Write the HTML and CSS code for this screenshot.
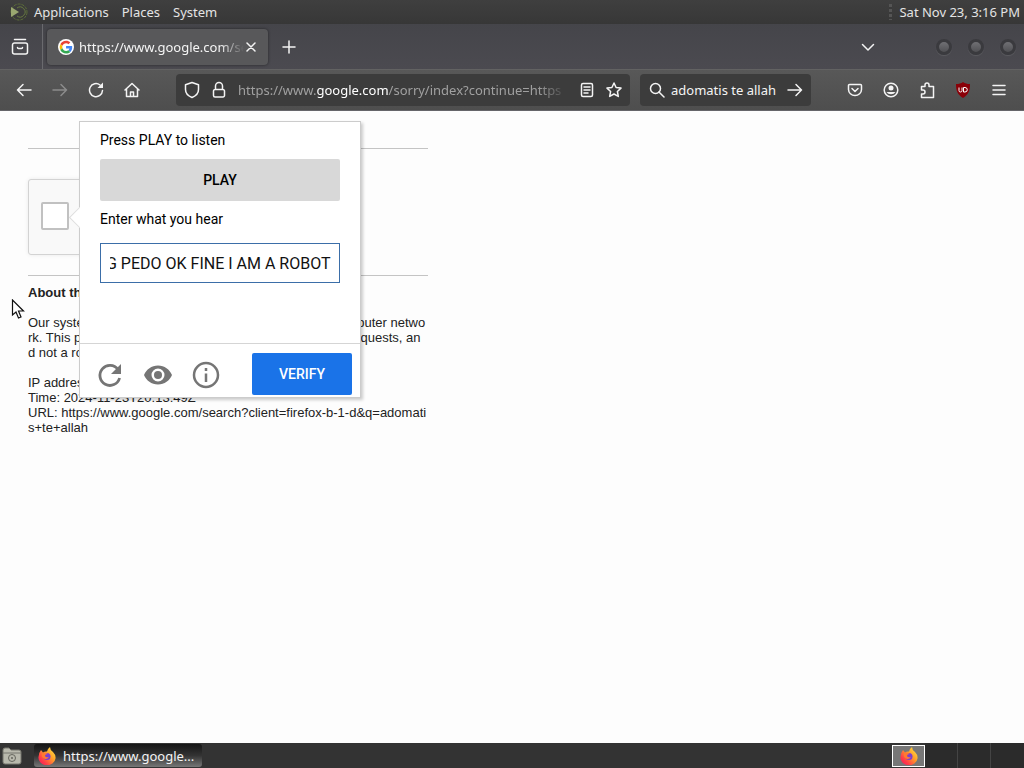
FILE: index.html
```html
<!DOCTYPE html>
<html lang="en">
<head>
    <meta charset="UTF-8">
    <meta name="viewport" content="width=device-width, initial-scale=1.0">
    <title>https://www.google.com/sorry</title>
    <link rel="stylesheet" href="styles.css">
</head>
<body>
    <header class="menu-bar">
        <svg class="distro" width="18" height="18" viewBox="0 0 18 18" fill="none">
            <circle cx="9" cy="9" r="8" stroke="#5c6e38" stroke-dasharray="3 1"/>
            <path d="M7 5a5 5 0 1 1 0 8" stroke="#687a40"/>
            <path d="M1 4l8 5-8 5z" fill="#9aa870"/>
        </svg>
        <nav class="menus">
            <button>Applications</button>
            <button>Places</button>
            <button>System</button>
        </nav>
        <span class="grip"></span>
        <time class="clock">Sat Nov 23, 3:16 PM</time>
    </header>

    <div class="tab-bar">
        <button class="view-btn" aria-label="Firefox View">
            <svg width="18" height="18" viewBox="0 0 18 18" class="line"><path d="M3.500 1.500h11M3.500 5h11a2 2 0 0 1 2 2v7a2 2 0 0 1-2 2h-11a2 2 0 0 1-2-2V7a2 2 0 0 1 2-2zM6.500 9.500q0 1 1 1h3q1 0 1-1"/></svg>
        </button>
        <div class="tab">
            <svg width="16" height="16" viewBox="0 0 48 48">
                <circle cx="24" cy="24" r="24" fill="#fff"/>
                <g transform="translate(5 5) scale(.8)">
                    <path fill="#ea4335" d="M24 9.500c3.500 0 6.700 1.200 9.200 3.600l6.900-6.900C35.900 2.400 30.500 0 24 0 14.600 0 6.500 5.400 2.600 13.200l8 6.200C12.400 13.700 17.700 9.500 24 9.500z"/>
                    <path fill="#4285f4" d="M47 24.600c0-1.600-.2-3.100-.4-4.600H24v9h12.900c-.6 3-2.300 5.500-4.700 7.200l7.700 6C44.400 38 47 31.800 47 24.600z"/>
                    <path fill="#fbbc05" d="M10.500 28.600c-.5-1.500-.8-3-.8-4.600s.3-3.100.8-4.600l-8-6.200C.9 16.500 0 20.100 0 24s.9 7.500 2.600 10.800z"/>
                    <path fill="#34a853" d="M24 48c6.500 0 11.900-2.100 15.900-5.800l-7.700-6c-2.200 1.500-4.900 2.300-8.200 2.300-6.300 0-11.600-4.200-13.500-9.900l-8 6.200C6.500 42.600 14.600 48 24 48z"/>
                </g>
            </svg>
            <span class="tab-title">https://www.google.com/se</span>
            <button class="tab-close" aria-label="Close tab">
                <svg width="10" height="10" viewBox="0 0 10 10" class="line"><path d="M1 1l8 8M9 1L1 9"/></svg>
            </button>
        </div>
        <button class="new-tab" aria-label="New tab">
            <svg width="14" height="14" viewBox="0 0 14 14" class="line"><path d="M7 1v12M1 7h12"/></svg>
        </button>
        <button class="tab-list" aria-label="List all tabs">
            <svg width="14" height="14" viewBox="0 0 14 14" class="line"><path d="M1.500 4.500L7 10l5.500-5.500"/></svg>
        </button>
        <div class="window-buttons">
            <button aria-label="Minimize"></button>
            <button aria-label="Maximize"></button>
            <button aria-label="Close"></button>
        </div>
    </div>

    <div class="nav-bar">
        <div class="nav-buttons">
            <button aria-label="Back"><svg width="16" height="16" viewBox="0 0 16 16" class="line"><path d="M15 8H1.500M7 2.500L1.500 8 7 13.500"/></svg></button>
            <button aria-label="Forward" class="dim"><svg width="16" height="16" viewBox="0 0 16 16" class="line"><path d="M1 8h13.500M9 2.500L14.500 8 9 13.500"/></svg></button>
            <button aria-label="Reload"><svg width="16" height="16" viewBox="0 0 16 16" class="line"><path d="M14.500 8.500a6.500 6.500 0 1 1-2.500-5.500"/><path d="M15 .5V6H9.500z" fill="currentColor" stroke="none"/></svg></button>
            <button aria-label="Home"><svg width="16" height="16" viewBox="0 0 16 16" class="line"><path d="M1 8l7-6.500L15 8M2.500 7v7.500h11V7M6.500 14.500V10h3v4.500"/></svg></button>
        </div>
        <div class="url-bar">
            <svg width="16" height="18" viewBox="0 0 16 18" class="line"><path d="M8 1.500l6.500 2.300v4.700c0 3.500-2.700 6.500-6.500 8-3.800-1.500-6.500-4.500-6.500-8V3.800z"/></svg>
            <svg width="14" height="18" viewBox="0 0 14 18" class="line"><path d="M3.500 8V5a3.500 3.500 0 0 1 7 0v3M3 8.500h8a1.500 1.500 0 0 1 1.500 1.500v4.500A1.500 1.500 0 0 1 11 16H3a1.500 1.500 0 0 1-1.500-1.500V10A1.500 1.500 0 0 1 3 8.500z"/></svg>
            <div class="url" role="textbox" aria-label="Address" contenteditable="true" spellcheck="false">https://www.<span class="domain">google.com</span>/sorry/index?continue=https</div>
            <button aria-label="Reader view"><svg width="14" height="16" viewBox="0 0 14 16" class="line"><rect x="1.500" y="1.500" width="11" height="13" rx="1.500"/><path d="M4 5h6M4 8h6M4 11h4"/></svg></button>
            <button aria-label="Bookmark"><svg width="16" height="16" viewBox="0 0 16 16" class="line"><path d="M8 1l2.100 4.500 4.900.6-3.600 3.400.9 4.900L8 12l-4.300 2.400.9-4.900L1 6.100l4.900-.6z"/></svg></button>
        </div>
        <div class="search-bar">
            <svg width="16" height="16" viewBox="0 0 16 16" class="line"><circle cx="6.500" cy="6.500" r="5"/><path d="M10 10l5 5"/></svg>
            <input type="text" value="adomatis te allah" aria-label="Search">
            <button aria-label="Go"><svg width="16" height="16" viewBox="0 0 16 16" class="line"><path d="M1 8h13.500M9 2.500L14.500 8 9 13.500"/></svg></button>
        </div>
        <div class="tools">
            <button aria-label="Pocket"><svg width="16" height="16" viewBox="0 0 16 16" class="line"><path d="M2.500 2.500h11a1 1 0 0 1 1 1V7.500a6.500 6 0 0 1-13 0v-4a1 1 0 0 1 1-1zM5 6.500l3 3 3-3"/></svg></button>
            <button aria-label="Account"><svg width="16" height="16" viewBox="0 0 16 16" class="line"><circle cx="8" cy="8" r="6.800"/><circle cx="8" cy="6" r="2.500" fill="currentColor" stroke="none"/><path d="M3.500 10h9a5 4 0 0 1-9 0z" fill="currentColor" stroke="none"/></svg></button>
            <button aria-label="Extensions"><svg width="16" height="18" viewBox="0 0 16 18" class="line"><path d="M2.500 5.500H6V4a2 2 0 0 1 4 0v1.500h4.500v11h-12V13H4a2 2 0 0 0 0-4H2.500z"/></svg></button>
            <button aria-label="uBlock Origin"><svg width="16" height="16" viewBox="0 0 16 16"><path d="M8 0c2 1.500 4 2 7 2 0 7-1.500 10.500-7 14C2.500 12.500 1 9 1 2c3 0 5-.5 7-2z" fill="#8a0008"/><path d="M4 5.500v3a1.500 1.500 0 0 0 3 0v-3M8.500 5.500v4.500h1.500a2.200 2.200 0 0 0 0-4.500z" fill="none" stroke="#fff"/></svg></button>
            <button aria-label="Menu"><svg width="14" height="14" viewBox="0 0 14 14" class="line"><path d="M1 2.500h12M1 7h12M1 11.500h12"/></svg></button>
        </div>
    </div>

    <main class="page">
        <div class="content">
            <hr>
            <div class="captcha-box">
                <input type="checkbox" aria-label="I'm not a robot">
            </div>
            <hr>
            <div class="about">
                <b>About this page</b>
                <p>Our systems have detected unusual traffic from your computer network. This page checks to see if it's really you sending the requests, and not a robot.</p>
                <p>IP address: hidden<br>Time: 2024-11-23T20:13:49Z<br>URL: https://www.google.com/search?client=firefox-b-1-d&amp;q=adomatis+te+allah</p>
            </div>
        </div>

        <form class="challenge">
            <div class="challenge-body">
                <span class="prompt">Press PLAY to listen</span>
                <button type="button" class="play-btn">PLAY</button>
                <label class="prompt" for="answer">Enter what you hear</label>
                <input type="text" id="answer" class="answer" value="G PEDO OK FINE I AM A ROBOT">
            </div>
            <div class="challenge-footer">
                <button type="button" aria-label="New challenge"><svg width="28" height="28" viewBox="0 0 28 28"><path d="M22 8.500A10 10 0 1 0 23.600 17" fill="none" stroke="#757575" stroke-width="2.800"/><path d="M25 3v10H15z" fill="#757575"/></svg></button>
                <button type="button" aria-label="Visual challenge"><svg width="28" height="28" viewBox="0 0 28 28"><path fill="#757575" fill-rule="evenodd" d="M14 4.500C7.500 4.500 2.300 8.500 0 14c2.300 5.500 7.500 9.500 14 9.500S25.700 19.500 28 14C25.700 8.500 20.500 4.500 14 4.500zM14 20.500a6.500 6.500 0 1 1 0-13 6.500 6.500 0 0 1 0 13z"/><circle cx="14" cy="14" r="4" fill="#757575"/></svg></button>
                <button type="button" aria-label="Help"><svg width="28" height="28" viewBox="0 0 28 28" fill="none" stroke="#757575" stroke-width="2.500"><circle cx="14" cy="14" r="12"/><path d="M14 12.500V21M14 7v3"/></svg></button>
                <button type="button" class="verify-btn">VERIFY</button>
            </div>
        </form>

        <svg class="pointer" width="14" height="21" viewBox="0 0 14 21"><path d="M1.500 1v15l3.500-3 2.500 6 2.500-1-2.500-6h5z" fill="#fff" stroke="#111" stroke-width="1.200"/></svg>
    </main>

    <footer class="task-bar">
        <button class="show-desktop" aria-label="Files">
            <svg width="20" height="18" viewBox="0 0 20 18"><path d="M1 3q0-2 2-2h4l2 2h8q2 0 2 2v10q0 2-2 2H3q-2 0-2-2z" fill="#b9b9ad" stroke="#77776e"/><path d="M1 6h18" stroke="#77776e"/><circle cx="10" cy="11" r="3.500" fill="none" stroke="#66665e"/><circle cx="10" cy="11" r="1" fill="#66665e"/></svg>
        </button>
        <button class="task">
            <svg width="18" height="18" viewBox="0 0 18 18"><use href="#firefox"/></svg>
            <span>https://www.google...</span>
        </button>
        <div class="workspaces">
            <button class="active" aria-label="Workspace 1">
                <svg width="18" height="18" viewBox="0 0 18 18">
                    <defs>
                        <linearGradient id="flame" x1="1" y1="0" x2="0" y2="1">
                            <stop offset="0" stop-color="#fff04a"/>
                            <stop offset=".4" stop-color="#ffa028"/>
                            <stop offset=".75" stop-color="#ff3a4a"/>
                            <stop offset="1" stop-color="#f0185c"/>
                        </linearGradient>
                        <g id="firefox">
                            <path d="M3 3l2 2.500Q7 4 9 4.500 9.500 1.500 12 0q0 3 3 5 3 3 2.500 6.500A8.500 7.500 0 0 1 .5 10Q.5 6 3 3z" fill="url(#flame)"/>
                            <circle cx="9" cy="9.500" r="3.500" fill="#7a3fd0"/>
                            <path d="M4 6q3-1 6 1-3 0-3 2 1 2 4 1-2 3-5 1.500Q3 10 4 6z" fill="#ff7a30"/>
                        </g>
                    </defs>
                    <use href="#firefox"/>
                </svg>
            </button>
            <button aria-label="Workspace 2"></button>
            <button aria-label="Workspace 3"></button>
            <button aria-label="Workspace 4"></button>
        </div>
    </footer>
</body>
</html>
```

FILE: styles.css
```css
* {
    box-sizing: border-box;
}
body {
    margin: 0;
    height: 100vh;
    display: flex;
    flex-direction: column;
    overflow: hidden;
    font-family: "Noto Sans", sans-serif;
    font-size: 13px;
    color: #f4f4f4;
    background-color: #fdfdfd;
}
button {
    display: flex;
    align-items: center;
    justify-content: center;
    padding: 0;
    border: none;
    background: none;
    color: inherit;
    font: inherit;
}
svg {
    display: block;
    flex-shrink: 0;
}
.line {
    fill: none;
    stroke: currentColor;
    stroke-width: 1.5;
    stroke-linecap: round;
    stroke-linejoin: round;
}
.menu-bar {
    display: flex;
    align-items: center;
    height: 24px;
    padding: 0 4px 0 10px;
    background: linear-gradient(#3f3f3f, #373737);
    color: #e4e4e4;
}
.menus {
    display: flex;
    gap: 13px;
    margin-left: 6px;
}
.grip {
    width: 3px;
    height: 16px;
    margin-left: auto;
    margin-right: 7px;
    background: repeating-linear-gradient(#555 0 3px, #3a3a3a 3px 5px);
}
.tab-bar {
    display: flex;
    align-items: center;
    height: 45px;
    padding-right: 8px;
    background: linear-gradient(#45454a, #4b4a50);
}
.view-btn {
    width: 43px;
    height: 45px;
    padding-right: 2px;
    border-right: 1px solid #6a6a6e;
}
.tab {
    display: flex;
    align-items: center;
    width: 221px;
    height: 36px;
    margin-left: 4px;
    padding: 0 12px 0 11px;
    border-radius: 4px;
    background-color: #58585a;
    box-shadow: 0 0 3px rgba(0,0,0,0.5);
}
.tab-title {
    flex: 1;
    margin-left: 5px;
    overflow: hidden;
    white-space: nowrap;
    -webkit-mask-image: linear-gradient(to left, transparent, #000 24px);
    mask-image: linear-gradient(to left, transparent, #000 24px);
}
.tab-close {
    margin-left: 2px;
}
.new-tab {
    margin-left: 14px;
}
.tab-list {
    margin-left: auto;
    margin-right: 61px;
}
.window-buttons {
    display: flex;
    gap: 16px;
}
.window-buttons button {
    width: 16px;
    height: 16px;
    border: 3px solid #3a3a3e;
    border-radius: 50%;
    background: linear-gradient(#707074, #505054);
    box-shadow: 0 1px 1px #5c5c60;
}
.nav-bar {
    display: flex;
    align-items: center;
    height: 42px;
    padding: 0 18px 0 16px;
    border-top: 1px solid #626262;
    border-bottom: 1px solid #66666a;
    background: linear-gradient(#585858, #4e4e4e);
}
.nav-buttons {
    display: flex;
    gap: 20px;
}
.dim {
    color: #8c8c8c;
}
.url-bar,
.search-bar {
    display: flex;
    align-items: center;
    height: 32px;
    border-radius: 4px;
    background-color: #3c3c3c;
}
.url-bar {
    flex: 1;
    gap: 12px;
    min-width: 0;
    margin-left: 36px;
    padding: 0 8px;
}
.url {
    flex: 1;
    min-width: 0;
    overflow: hidden;
    white-space: nowrap;
    color: #a0a0a0;
    -webkit-mask-image: linear-gradient(to left, transparent, #000 30px);
    mask-image: linear-gradient(to left, transparent, #000 30px);
}
.domain {
    color: #fff;
}
.search-bar {
    width: 171px;
    margin-left: 10px;
    padding: 0 8px 0 9px;
}
.search-bar input {
    flex: 1;
    min-width: 0;
    margin-left: 6px;
    padding: 0;
    border: none;
    outline: none;
    background: none;
    color: inherit;
    font: inherit;
}
.tools {
    display: flex;
    gap: 20px;
    margin-left: 36px;
}
.tools button:last-child {
    margin-left: 1px;
}
.page {
    position: relative;
    flex: 1;
    color: #222;
    font: 13px/15px "Liberation Sans", Arial, sans-serif;
}
.content {
    max-width: 428px;
    padding: 37px 0 0 28px;
}
.content hr {
    height: 1px;
    margin: 0;
    border: none;
    background-color: #c4c4c4;
}
.captcha-box {
    display: flex;
    align-items: center;
    width: 304px;
    height: 76px;
    margin: 30px 0 20px;
    padding-left: 12px;
    border: 1px solid #d3d3d3;
    border-radius: 3px;
    background-color: #f9f9f9;
    box-shadow: 0 0 4px rgba(0,0,0,0.08);
}
.captcha-box input {
    appearance: none;
    width: 28px;
    height: 28px;
    margin: 0 0 2px;
    border: 2px solid #c1c1c1;
    border-radius: 2px;
    background-color: #fff;
}
.about {
    margin-top: 9px;
    padding-right: 1px;
    word-break: break-all;
}
.about p {
    margin: 15px 0 0;
}
/* popup floats over the page */
.challenge {
    position: absolute;
    top: 10px;
    left: 79px;
    width: 282px;
    border: 1px solid #ccc;
    background-color: #fff;
    box-shadow: 2px 2px 3px rgba(0,0,0,0.2);
    color: #000;
    font: 14px/20px Roboto, sans-serif;
}
.challenge::before {
    content: "";
    position: absolute;
    top: 88px;
    left: -8px;
    width: 14px;
    height: 14px;
    border-left: 1px solid #ddd;
    border-bottom: 1px solid #ddd;
    background-color: #fff;
    transform: rotate(45deg);
}
.challenge-body {
    position: relative;
    display: flex;
    flex-direction: column;
    padding: 8px 20px 60px;
    background-color: #fff;
}
.play-btn {
    height: 42px;
    margin: 9px 0 8px;
    border-radius: 2px;
    background-color: #d8d8d8;
    font-weight: 500;
}
.answer {
    height: 40px;
    margin-top: 14px;
    padding: 0 8px 0 9px;
    border: 1px solid #3b6ea8;
    outline: none;
    color: #111;
    font: 16px Roboto, sans-serif;
    text-indent: -4px;
}
.challenge-footer {
    display: flex;
    align-items: center;
    gap: 20px;
    height: 54px;
    padding: 8px 8px 0 16px;
    border-top: 1px solid #d5d5d5;
}
.verify-btn {
    width: 100px;
    height: 42px;
    margin: 0 0 2px auto;
    border-radius: 2px;
    background-color: #1a73e8;
    color: #fff;
    font-weight: 500;
}
.pointer {
    position: absolute;
    top: 188px;
    left: 11px;
}
.task-bar {
    display: flex;
    align-items: center;
    height: 25px;
    padding-left: 2px;
    background-color: #333;
}
.task {
    gap: 7px;
    width: 168px;
    height: 23px;
    margin-left: 12px;
    padding-left: 4px;
    justify-content: flex-start;
    border-radius: 3px;
    background: linear-gradient(#151515, #333 50%, #777);
    white-space: nowrap;
    overflow: hidden;
}
.workspaces {
    display: flex;
    height: 25px;
    margin-left: auto;
}
.workspaces button {
    width: 33px;
    border-right: 1px solid #444;
    background-color: #2b2b2b;
}
.workspaces button:last-child {
    border-right: none;
}
.workspaces .active {
    height: 22px;
    align-self: center;
    border: 1px solid #fff;
    background-color: #777;
}
```
